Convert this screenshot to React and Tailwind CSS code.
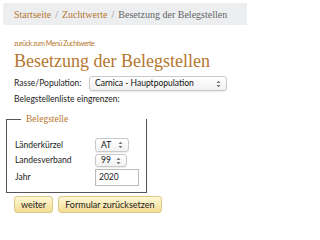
import React from "react";

const serif = { fontFamily: '"Liberation Serif", serif' };

const Arrows = () => (
  <svg width="5" height="8" viewBox="0 0 5 8" className="ml-auto">
    <path d="M0.5 3 L2.5 0.8 L4.5 3 Z" fill="#777" />
    <path d="M0.5 5 L2.5 7.2 L4.5 5 Z" fill="#777" />
  </svg>
);

const FakeSelect = ({ value, className }) => (
  <div
    className={`flex items-center px-[5px] rounded-[3px] border border-[#c9c9c9] bg-gradient-to-b from-white to-[#f1f1f1] shadow-[0_1px_1px_rgba(0,0,0,0.08)] text-[8.5px] text-[#111] ${className}`}
  >
    <span>{value}</span>
    <Arrows />
  </div>
);

const Button = ({ children }) => (
  <button className="h-[17px] px-[6px] rounded-[3px] border border-[#dcc887] bg-gradient-to-b from-[#fff8d6] to-[#f3dc93] text-[9px] text-[#222] leading-none">
    {children}
  </button>
);

export default function App() {
  return (
    <div
      className="w-[247px] h-[220px] bg-white overflow-hidden pt-[3px] pl-[3px]"
      style={{ fontFamily: '"Lato", "Liberation Sans", sans-serif' }}
    >
      {/* Breadcrumb */}
      <div
        className="h-[22px] bg-[#eceef0] rounded-l-[3px] flex items-center pl-[11px] text-[10px] whitespace-nowrap"
        style={serif}
      >
        <span className="text-[#b5772f]">Startseite</span>
        <span className="text-[#888] mx-[4px]">/</span>
        <span className="text-[#b5772f]">Zuchtwerte</span>
        <span className="text-[#888] mx-[4px]">/</span>
        <span className="text-[#666]">Besetzung der Belegstellen</span>
      </div>

      <div className="pl-[11px] pr-[3px]">
        <div className="mt-[15px] text-[7px] tracking-[-0.45px] text-[#b5772f] leading-none">
          zurück zum Menü Zuchtwerte
        </div>
        <h1
          className="text-[18px] text-[#b5772f] leading-none mt-[5px] whitespace-nowrap"
          style={serif}
        >
          Besetzung der Belegstellen
        </h1>

        <div className="flex items-center mt-[6px] text-[8.5px] text-[#222]">
          <span className="w-[75px]">Rasse/Population:</span>
          <FakeSelect value="Carnica - Hauptpopulation" className="w-[138px] h-[15px]" />
        </div>
        <div className="mt-[2px] text-[8.5px] text-[#222]">Belegstellenliste eingrenzen:</div>
      </div>

      {/* Fieldset */}
      <fieldset className="ml-[3px] mt-[9px] w-[141px] border border-[#555] pl-[8px] pb-[6px]">
        <legend className="ml-[6px] w-[125px] pl-[5px] bg-white text-[9.5px] text-[#b5772f] leading-none" style={serif}>
          Belegstelle
        </legend>
        <div className="mt-[14px] flex flex-col gap-[2px] text-[8.5px] text-[#222]">
          <div className="flex items-center">
            <span className="w-[80px]">Länderkürzel</span>
            <FakeSelect value="AT" className="w-[34px] h-[14px]" />
          </div>
          <div className="flex items-center">
            <span className="w-[80px]">Landesverband</span>
            <FakeSelect value="99" className="w-[32px] h-[13px]" />
          </div>
          <div className="flex items-center">
            <span className="w-[80px]">Jahr</span>
            <div className="w-[44px] h-[17px] border border-[#bbb] flex items-center px-[3px] text-[8.5px]">
              2020
            </div>
          </div>
        </div>
      </fieldset>

      <div className="flex gap-[5px] pl-[11px] mt-[3px]">
        <Button>weiter</Button>
        <Button>Formular zurücksetzen</Button>
      </div>
    </div>
  );
}
